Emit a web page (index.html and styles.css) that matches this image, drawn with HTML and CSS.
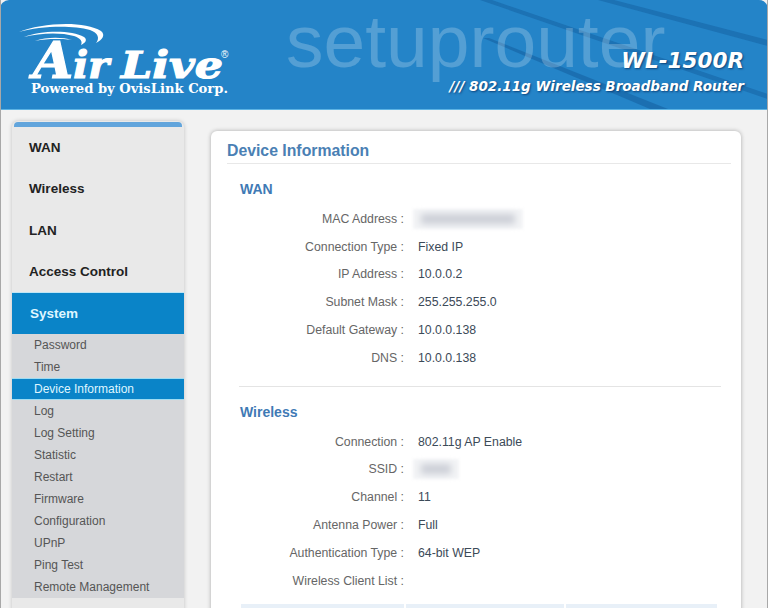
FILE: index.html
```html
<!DOCTYPE html>
<html lang="en">
<head>
    <meta charset="UTF-8">
    <meta name="viewport" content="width=device-width, initial-scale=1.0">
    <title>Device Information - WL-1500R</title>
    <link rel="stylesheet" href="styles.css">
</head>
<body>
    <div class="page">
        <div class="banner">
            <svg class="banner-stripes" width="768" height="109" viewBox="0 0 768 109">
                <path d="M480 0 L492 0 L768 94 L768 99 Z" fill="#145f9f" opacity="0.5"/>
                <path d="M598 0 L614 0 L768 40 L768 46 Z" fill="#145f9f" opacity="0.5"/>
                <path d="M483 38 L489 38 L668 109 L650 109 Z" fill="#145f9f" opacity="0.55"/>
            </svg>
            <svg class="logo" width="240" height="104" viewBox="0 0 240 104">
                <path d="M19 32 C40 23 84 20 101 31 C106 35 102 40 96 43 C100 38 98 33 90 30 C72 25 40 26 19 32 Z" fill="#fff"/>
                <path d="M24 37 C42 30 72 30 84 37 C88 40 85 43 81 45 C83 41 80 38 74 36 C60 32 40 33 24 37 Z" fill="#fff"/>
                <path d="M35 41 C46 37 62 37 72 40 C66 39 48 38 35 41 Z" fill="#fff"/>
                <text class="logo-name" x="33" y="78" textLength="76" lengthAdjust="spacingAndGlyphs"><tspan class="logo-cap">A</tspan>ir</text>
                <text class="logo-name" x="121" y="78" textLength="102" lengthAdjust="spacingAndGlyphs">Live</text>
                <text class="logo-reg" x="221" y="58">®</text>
                <text class="logo-sub" x="31" y="93" textLength="197" lengthAdjust="spacingAndGlyphs">Powered by OvisLink Corp.</text>
            </svg>
            <div class="watermark">setuprouter</div>
            <div class="banner-title">
                <div class="model">WL-1500R</div>
                <div class="tagline">/// 802.11g Wireless Broadband Router</div>
            </div>
        </div>

        <div class="content">
            <div class="sidebar">
                <div class="sidebar-cap"></div>
                <a class="menu-item">WAN</a>
                <a class="menu-item">Wireless</a>
                <a class="menu-item">LAN</a>
                <a class="menu-item">Access Control</a>
                <a class="menu-item active">System</a>
                <div class="submenu">
                    <a class="sub-item">Password</a>
                    <a class="sub-item">Time</a>
                    <a class="sub-item active">Device Information</a>
                    <a class="sub-item">Log</a>
                    <a class="sub-item">Log Setting</a>
                    <a class="sub-item">Statistic</a>
                    <a class="sub-item">Restart</a>
                    <a class="sub-item">Firmware</a>
                    <a class="sub-item">Configuration</a>
                    <a class="sub-item">UPnP</a>
                    <a class="sub-item">Ping Test</a>
                    <a class="sub-item">Remote Management</a>
                </div>
            </div>

            <div class="card">
                <h1 class="card-title">Device Information</h1>

                <div class="section">
                    <h2 class="section-title">WAN</h2>
                    <div class="info-row"><span class="info-label">MAC Address :</span><span class="info-value"><span class="blur-box mac"><i></i></span></span></div>
                    <div class="info-row"><span class="info-label">Connection Type :</span><span class="info-value">Fixed IP</span></div>
                    <div class="info-row"><span class="info-label">IP Address :</span><span class="info-value">10.0.0.2</span></div>
                    <div class="info-row"><span class="info-label">Subnet Mask :</span><span class="info-value">255.255.255.0</span></div>
                    <div class="info-row"><span class="info-label">Default Gateway :</span><span class="info-value">10.0.0.138</span></div>
                    <div class="info-row"><span class="info-label">DNS :</span><span class="info-value">10.0.0.138</span></div>
                </div>

                <div class="section section-wireless">
                    <h2 class="section-title">Wireless</h2>
                    <div class="info-row"><span class="info-label">Connection :</span><span class="info-value">802.11g AP Enable</span></div>
                    <div class="info-row"><span class="info-label">SSID :</span><span class="info-value"><span class="blur-box ssid"><i></i></span></span></div>
                    <div class="info-row"><span class="info-label">Channel :</span><span class="info-value">11</span></div>
                    <div class="info-row"><span class="info-label">Antenna Power :</span><span class="info-value">Full</span></div>
                    <div class="info-row"><span class="info-label">Authentication Type :</span><span class="info-value">64-bit WEP</span></div>
                    <div class="info-row"><span class="info-label">Wireless Client List :</span><span class="info-value"></span></div>
                    <div class="client-table">
                        <div class="client-cell"></div>
                        <div class="client-cell"></div>
                        <div class="client-cell"></div>
                    </div>
                </div>
            </div>
        </div>
    </div>
</body>
</html>
```

FILE: styles.css
```css
* {
    margin: 0;
    padding: 0;
    box-sizing: border-box;
}

html, body {
    height: 608px;
    overflow: hidden;
}

body {
    font-family: "Liberation Sans", Arial, sans-serif;
    background: #f2f2f2;
}

.page {
    height: 608px;
    border-left: 1px solid #a8a8a8;
    border-right: 1px solid #a8a8a8;
    overflow: hidden;
}

/* Banner */
.banner {
    position: relative;
    height: 110px;
    margin: 0 -1px;
    background: #2484c8;
    border-bottom: 1px solid #5cb3e4;
    border-radius: 9px 9px 0 0;
    overflow: hidden;
}

.banner-stripes {
    position: absolute;
    left: 0;
    top: 0;
}

.logo {
    position: absolute;
    left: 0;
    top: 0;
}

.logo-name {
    font-family: "DejaVu Serif", serif;
    font-weight: bold;
    font-style: italic;
    font-size: 38px;
    fill: #fff;
    stroke: #fff;
    stroke-width: 1.2px;
}

.logo-cap {
    font-size: 50px;
}

.logo-reg {
    font-family: "Liberation Sans", sans-serif;
    font-size: 10px;
    fill: #fff;
}

.logo-sub {
    font-family: "DejaVu Serif", serif;
    font-weight: bold;
    font-size: 13px;
    fill: #fff;
}

.watermark {
    position: absolute;
    left: 286px;
    top: -2px;
    font-size: 75px;
    line-height: 86px;
    color: rgba(255, 255, 255, 0.22);
}

.banner-title {
    position: absolute;
    right: 24px;
    top: 47px;
    text-align: right;
    font-family: "DejaVu Sans", sans-serif;
    font-weight: bold;
    font-style: italic;
    color: #fff;
    text-shadow: 1px 1px 2px rgba(0, 40, 90, 0.7);
}

.model {
    font-size: 21.5px;
    line-height: 28px;
}

.tagline {
    font-size: 13.5px;
    line-height: 22px;
}

/* Layout */
.content {
    display: flex;
    align-items: flex-start;
    padding: 11px 0 0 11px;
}

/* Sidebar */
.sidebar {
    width: 172px;
    flex: none;
    background: #e9e9e9;
    border-radius: 6px 6px 0 0;
    box-shadow: 0 0 4px rgba(0, 0, 0, 0.2);
    padding-bottom: 20px;
}

.sidebar-cap {
    height: 5px;
    margin: 1px 2px 0;
    background: #62a5dc;
    border-radius: 4px 4px 0 0;
}

.menu-item {
    display: block;
    height: 41.3px;
    padding-left: 17px;
    font-size: 13.5px;
    font-weight: bold;
    line-height: 42px;
    color: #222;
}

.menu-item.active {
    height: 42px;
    background: #0a84c8;
    border-top: 1px solid #bfe6f5;
    line-height: 41px;
    padding-left: 18px;
    color: #dff6ff;
}

.submenu {
    background: #d6d7da;
}

.sub-item {
    display: block;
    height: 22px;
    padding-left: 22px;
    font-size: 12px;
    line-height: 22px;
    color: #555;
}

.sub-item.active {
    background: #0a84c8;
    color: #dff6ff;
    border-top: 1px solid #9fdcf2;
    border-bottom: 1px solid #9fdcf2;
    line-height: 20px;
}

/* Card */
.card {
    width: 530px;
    height: 500px;
    margin: 10px 0 0 27px;
    padding: 10px 10px 0 16px;
    background: #fff;
    border-radius: 6px 6px 0 0;
    box-shadow: 0 0 4px rgba(0, 0, 0, 0.3);
}

.card-title {
    height: 23px;
    font-size: 15.8px;
    font-weight: bold;
    line-height: 19px;
    color: #4a80b4;
    border-bottom: 1px solid #e8e8e8;
}

.section {
    padding: 16px 10px 0 13px;
}

.section-title {
    font-size: 14px;
    font-weight: bold;
    line-height: 19px;
    color: #3f7ab5;
    margin-bottom: 6px;
}

.section-wireless {
    margin: 14px 10px 0 12px;
    padding: 16px 0 0 1px;
    border-top: 1px solid #e4e4e4;
}

.info-row {
    display: flex;
    height: 27.8px;
    align-items: center;
    font-size: 12.3px;
}

.info-label {
    width: 164px;
    text-align: right;
    color: #666;
}

.info-value {
    margin-left: 14px;
    color: #3c4a58;
}

.blur-box {
    display: block;
    width: 110px;
    height: 20px;
    margin-left: -5px;
    padding: 5px 8px;
    background: #f3f4f6;
    filter: blur(1.5px);
}

.blur-box i {
    display: block;
    height: 10px;
    background: #cbced6;
    filter: blur(3px);
}

.blur-box.ssid {
    width: 46px;
}

.client-table {
    display: flex;
    gap: 2px;
    margin: 9px 0 0 1px;
}

.client-cell {
    height: 30px;
    background: #e8f0f8;
}

.client-cell:nth-child(1) {
    width: 163px;
}

.client-cell:nth-child(2) {
    width: 158px;
}

.client-cell:nth-child(3) {
    width: 151px;
}
```
